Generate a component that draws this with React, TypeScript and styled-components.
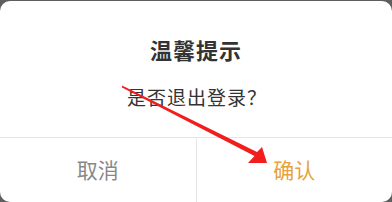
import styled, { createGlobalStyle } from 'styled-components';

const GlobalStyle = createGlobalStyle`
	html, body {
		margin: 0;
		padding: 0;
		background: #5e5e5e;
	}
	body {
		font-family: 'Noto Sans CJK SC', 'Noto Sans', sans-serif;
	}
`;

const Screen = styled.div`
	width: 392px;
	height: 202px;
	padding-top: 1px;
	box-sizing: border-box;
	position: relative;
	overflow: hidden;
`;

const Dialog = styled.div`
	width: 100%;
	height: 100%;
	background: #ffffff;
	border-radius: 10px;
	display: flex;
	flex-direction: column;
	overflow: hidden;
`;

const Body = styled.div`
	flex: 1;
	display: flex;
	flex-direction: column;
	align-items: center;
	padding-top: 33px;
	gap: 20px;
	box-sizing: border-box;
`;

const Title = styled.div`
	font-size: 22px;
	line-height: 30px;
	font-weight: 700;
	color: #333333;
	letter-spacing: 1px;
`;

const Message = styled.div`
	font-size: 19px;
	line-height: 26px;
	color: #333333;
	letter-spacing: 1px;
	padding-left: 2px;
`;

const Footer = styled.div`
	height: 64px;
	border-top: 1px solid #e6e6e6;
	display: flex;
`;

const Action = styled.div<{ $primary?: boolean }>`
	flex: 1;
	display: flex;
	align-items: center;
	justify-content: center;
	font-size: 21px;
	padding-bottom: 2px;
	color: ${({ $primary }) => ($primary ? '#e6a23c' : '#888888')};
	& + & {
		border-left: 1px solid #e6e6e6;
	}
`;

const Arrow = styled.svg`
	position: absolute;
	left: 0;
	top: 0;
	pointer-events: none;
`;

export default function App() {
	return (
		<>
			<GlobalStyle />
			<Screen>
				<Dialog>
					<Body>
						<Title>温馨提示</Title>
						<Message>是否退出登录？</Message>
					</Body>
					<Footer>
						<Action>取消</Action>
						<Action $primary>确认</Action>
					</Footer>
				</Dialog>
				<Arrow width='392' height='202' viewBox='0 0 392 202'>
					<polygon
						points='122,85.5 257,152 262,147 267,163 248,163 254.5,156 122,87.5'
						fill='#f21d1d'
					/>
				</Arrow>
			</Screen>
		</>
	);
}
